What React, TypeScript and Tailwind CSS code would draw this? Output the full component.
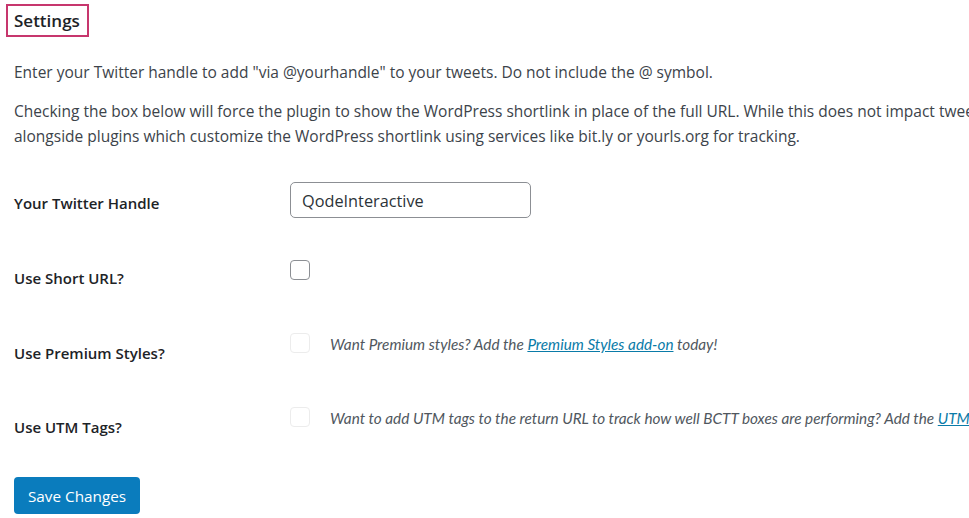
import React from "react";

const Row = ({
  label,
  children,
  labelMt,
}: {
  label: string;
  children: React.ReactNode;
  labelMt: string;
}) => (
  <div className="flex h-[75px]">
    <div className={`w-[276px] shrink-0 ${labelMt}`}>
      <span className="text-[15px] leading-[20px] font-semibold text-[#1d2327]">{label}</span>
    </div>
    <div className="flex-1 min-w-0">{children}</div>
  </div>
);

export default function App() {
  return (
    <div
      className="w-[969px] h-[518px] bg-white overflow-hidden relative text-[#3c434a]"
      style={{ fontFamily: "'Open Sans', 'Noto Sans', sans-serif" }}
    >
      <div className="pt-[4px] pl-[6px]">
        <div className="inline-block border-2 border-[#c7366d] h-[33px] w-[83px] pl-[6px]">
          <h2 className="text-[17px] leading-[30px] font-semibold text-[#1d2327]">Settings</h2>
        </div>
      </div>
      <div className="pl-[14px] whitespace-nowrap">
        <p className="mt-[23px] text-[15.5px] leading-[25px]">
          Enter your Twitter handle to add "via @yourhandle" to your tweets. Do not include the @ symbol.
        </p>
        <p className="mt-[14px] text-[15.5px] leading-[25px]">
          Checking the box below will force the plugin to show the WordPress shortlink in place of the full URL. While this does not impact tweet length, it is useful
          <br />
          alongside plugins which customize the WordPress shortlink using services like bit.ly or yourls.org for tracking.
        </p>
        <div className="mt-[15px]">
          <Row label="Your Twitter Handle" labelMt="mt-[27px]">
            <div className="mt-[18px] w-[241px] h-[36px] border border-[#8c8f94] rounded-[5px] px-[11px] pt-[3px] flex items-center text-[16.3px] text-[#2c3338]">
              QodeInteractive
            </div>
          </Row>
          <Row label="Use Short URL?" labelMt="mt-[27px]">
            <div className="mt-[21px] w-[20px] h-[20px] border border-[#8c8f94] rounded-[4px] bg-white" />
          </Row>
          <Row label="Use Premium Styles?" labelMt="mt-[27px]">
            <div className="mt-[18px] flex items-center">
              <div className="w-[20px] h-[20px] border border-[#ececec] rounded-[4px] bg-white shrink-0" />
              <span
                className="ml-[20px] pt-[2px] italic text-[15.3px] leading-[20px] text-[#50575e]"
                style={{ fontFamily: "Lato, 'Open Sans', sans-serif" }}
              >
                Want Premium styles? Add the{" "}
                <a className="underline text-[#0a7ba8]">Premium Styles add-on</a> today!
              </span>
            </div>
          </Row>
          <Row label="Use UTM Tags?" labelMt="mt-[26px]">
            <div className="mt-[17px] flex items-center">
              <div className="w-[20px] h-[20px] border border-[#ececec] rounded-[4px] bg-white shrink-0" />
              <span
                className="ml-[20px] pt-[2px] italic text-[15.3px] leading-[20px] text-[#50575e]"
                style={{ fontFamily: "Lato, 'Open Sans', sans-serif" }}
              >
                Want to add UTM tags to the return URL to track how well BCTT boxes are performing? Add the{" "}
                <a className="underline text-[#0a7ba8]">UTM tags add-on</a> today!
              </span>
            </div>
          </Row>
        </div>
        <button className="mt-[13px] w-[126px] h-[37px] pt-[1px] rounded-[4px] bg-[#0a7cbd] text-white text-[15.3px]">
          Save Changes
        </button>
      </div>
    </div>
  );
}
